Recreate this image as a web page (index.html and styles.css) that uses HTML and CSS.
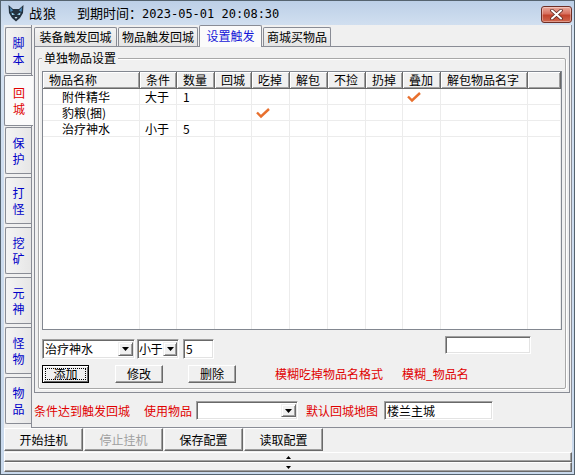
FILE: index.html
```html
<!DOCTYPE html>
<html lang="zh-CN">
<head>
<meta charset="utf-8">
<title>战狼</title>
<link rel="stylesheet" href="styles.css">
</head>
<body>
<div class="win">
  <div class="titlebar">
    <svg class="logo" width="18" height="18" viewBox="0 0 18 18">
      <path d="M1.5 1 L6 5 L12 5 L16.5 1 L16 9 L13 14 L9 17.5 L5 14 L2 9 Z" fill="#24323f"/>
      <path d="M3 3 L6 6.5 L3.5 8 Z M15 3 L12 6.5 L14.5 8 Z" fill="#4f8fc0"/>
      <path d="M4.5 8.5 L8 10.5 L5 11 Z M13.5 8.5 L10 10.5 L13 11 Z" fill="#9fe0ff"/>
      <path d="M7.5 13 L9 15 L10.5 13 Z" fill="#cfe8f5"/>
    </svg>
    <span class="app">战狼</span>
    <span class="expire">到期时间：<span class="mono">2023-05-01 20:08:30</span></span>
    <div class="close">
      <svg width="13" height="11" viewBox="0 0 13 11">
        <path d="M2 1.5 L11 9.5 M11 1.5 L2 9.5" stroke="#5a2a22" stroke-width="3.6" stroke-linecap="round"/>
        <path d="M2 1.5 L11 9.5 M11 1.5 L2 9.5" stroke="#ffffff" stroke-width="2" stroke-linecap="round"/>
      </svg>
    </div>
  </div>
  <div class="client">
    <div class="outer">
      <div class="vtabs">
        <div class="vtab">脚<br>本</div>
        <div class="vtab active">回<br>城</div>
        <div class="vtab">保<br>护</div>
        <div class="vtab">打<br>怪</div>
        <div class="vtab">挖<br>矿</div>
        <div class="vtab">元<br>神</div>
        <div class="vtab">怪<br>物</div>
        <div class="vtab">物<br>品</div>
      </div>
      <div class="opanel">
        <div class="htabs">
          <div class="htab w1">装备触发回城</div>
          <div class="htab w2">物品触发回城</div>
          <div class="htab w3 active">设置触发</div>
          <div class="htab w4">商城买物品</div>
        </div>
        <div class="ipanel">
          <div class="group">
            <div class="legend">单独物品设置</div>
            <div class="lv">
              <div class="lv-head">
                <div class="hc">物品名称</div>
                <div class="hc">条件</div>
                <div class="hc">数量</div>
                <div class="hc">回城</div>
                <div class="hc">吃掉</div>
                <div class="hc">解包</div>
                <div class="hc">不捡</div>
                <div class="hc">扔掉</div>
                <div class="hc">叠加</div>
                <div class="hc">解包物品名字</div>
                <div class="hc"></div>
              </div>
              <div class="lv-body">
                <div class="c name">附件精华</div><div class="c">大于</div><div class="c num">1</div><div class="c"></div><div class="c"></div><div class="c"></div><div class="c"></div><div class="c"></div><div class="c"><svg class="chk" width="16" height="12" viewBox="0 0 16 12"><path d="M2 5.5 L6 9.5 L14 2" fill="none" stroke="#e8702e" stroke-width="2.4"/></svg></div><div class="c"></div><div class="c"></div>
                <div class="c name">豹粮(捆)</div><div class="c"></div><div class="c"></div><div class="c"></div><div class="c"><svg class="chk" width="16" height="12" viewBox="0 0 16 12"><path d="M2 5.5 L6 9.5 L14 2" fill="none" stroke="#e8702e" stroke-width="2.4"/></svg></div><div class="c"></div><div class="c"></div><div class="c"></div><div class="c"></div><div class="c"></div><div class="c"></div>
                <div class="c name">治疗神水</div><div class="c">小于</div><div class="c num">5</div><div class="c"></div><div class="c"></div><div class="c"></div><div class="c"></div><div class="c"></div><div class="c"></div><div class="c"></div><div class="c"></div>
                <div class="f"></div><div class="f"></div><div class="f"></div><div class="f"></div><div class="f"></div><div class="f"></div><div class="f"></div><div class="f"></div><div class="f"></div><div class="f"></div><div class="f"></div>
              </div>
            </div>
            <div class="ctrls">
              <div class="combo cb-item"><span class="val">治疗神水</span><span class="drop"><svg width="7" height="4" viewBox="0 0 7 4"><path d="M0 0 H7 L3.5 4 Z" fill="#000"/></svg></span></div>
              <div class="combo cb-cond"><span class="val">小于</span><span class="drop"><svg width="7" height="4" viewBox="0 0 7 4"><path d="M0 0 H7 L3.5 4 Z" fill="#000"/></svg></span></div>
              <div class="edit ed-num">5</div>
              <div class="edit ed-right"></div>
            </div>
            <div class="btns">
              <div class="btn def"><span class="focus">添加</span></div>
              <div class="btn b-mod">修改</div>
              <div class="btn b-del">删除</div>
              <span class="red hint1">模糊吃掉物品名格式</span>
              <span class="red hint2">模糊_物品名</span>
            </div>
          </div>
        </div>
        <div class="cond">
          <span class="red">条件达到触发回城</span>
          <span class="red use">使用物品</span>
          <div class="combo cb-use"><span class="val"></span><span class="drop"><svg width="7" height="4" viewBox="0 0 7 4"><path d="M0 0 H7 L3.5 4 Z" fill="#000"/></svg></span></div>
          <span class="red map">默认回城地图</span>
          <div class="edit ed-map">楼兰主城</div>
        </div>
      </div>
    </div>
    <div class="actions">
      <div class="abtn">开始挂机</div>
      <div class="abtn disabled">停止挂机</div>
      <div class="abtn">保存配置</div>
      <div class="abtn">读取配置</div>
    </div>
    <div class="spin"><svg width="5" height="3" viewBox="0 0 5 3"><path d="M0 3 H5 L2.5 0 Z" fill="#000"/></svg></div>
    <div class="spin"><svg width="5" height="3" viewBox="0 0 5 3"><path d="M0 0 H5 L2.5 3 Z" fill="#000"/></svg></div>
  </div>
</div>
</body>
</html>
```

FILE: styles.css
```css
* { box-sizing: border-box; margin: 0; padding: 0; }

html, body {
  width: 575px;
  height: 475px;
  overflow: hidden;
  background: #c8d9ed;
}

body {
  font-family: "Noto Sans CJK SC", "Noto Sans", sans-serif;
  font-size: 12px;
  color: #000;
}

.win {
  width: 575px;
  height: 475px;
  display: flex;
  flex-direction: column;
  border: 1px solid #55636f;
  padding: 0 2px 2px 3px;
  background: linear-gradient(#bccfe7, #d6e3f2 30px, #cddcee 200px, #c9d9ec);
}

/* Title bar */
.titlebar {
  height: 24px;
  display: flex;
  align-items: center;
  flex-shrink: 0;
}

.logo { margin-left: 3px; flex-shrink: 0; }

.app {
  margin-left: 4px;
  font-size: 13px;
  line-height: 16px;
  letter-spacing: 1px;
}

.expire {
  margin-left: 20px;
  font-size: 13px;
  line-height: 16px;
}

.mono {
  font-family: "DejaVu Sans Mono", monospace;
  font-size: 12px;
}

.close {
  margin-left: auto;
  margin-top: 2px;
  width: 31px;
  height: 17px;
  border: 1px solid #6e2e25;
  border-radius: 3px;
  background: linear-gradient(#e9a99c, #d8705e 45%, #c2432c 55%, #d0684f);
  box-shadow: inset 0 0 0 1px rgba(255,255,255,0.35);
  display: flex;
  align-items: center;
  justify-content: center;
}

/* Client */
.client {
  flex: 1;
  background: #f0f0f0;
  display: flex;
  flex-direction: column;
}

.outer {
  height: 403px;
  display: flex;
  flex-shrink: 0;
}

.vtabs {
  width: 27px;
  flex-shrink: 0;
  padding-top: 2px;
  display: flex;
  flex-direction: column;
}

.vtab {
  margin-left: 1px;
  width: 26px;
  height: 47px;
  margin-bottom: 3px;
  border: 1px solid #898c95;
  border-right: none;
  border-radius: 2px 0 0 2px;
  background: linear-gradient(90deg, #f4f4f4, #e6e6e6);
  color: #0000c8;
  line-height: 16px;
  font-size: 12px;
  display: flex;
  align-items: center;
  justify-content: center;
  text-align: center;
}

.vtab.active {
  position: relative;
  z-index: 2;
  margin-left: 0;
  margin-top: -2px;
  margin-bottom: 1px;
  width: 29px;
  margin-right: -2px;
  height: 51px;
  background: #fbfbfb;
  color: #e00000;
}

.opanel {
  width: 541px;
  border-left: 1px solid #898c95;
  border-right: 1px solid #898c95;
  border-bottom: 1px solid #898c95;
  padding: 2px 0 0 2px;
  display: flex;
  flex-direction: column;
}

/* Horizontal tabs */
.htabs {
  height: 19px;
  display: flex;
  align-items: flex-end;
  flex-shrink: 0;
}

.htab {
  height: 19px;
  border: 1px solid #898c95;
  border-bottom: none;
  border-radius: 2px 2px 0 0;
  background: linear-gradient(#f4f4f4, #e4e4e4);
  line-height: 17px;
  text-align: center;
  margin-right: 1px;
}

.htab.w1 { width: 83px; }
.htab.w2 { width: 80px; }
.htab.w3 { width: 63px; }
.htab.w4 { width: 68px; }

.htab.active {
  position: relative;
  z-index: 2;
  height: 22px;
  margin-bottom: -1px;
  background: #fbfbfb;
  color: #1515d8;
  line-height: 20px;
}

.ipanel {
  width: 536px;
  height: 347px;
  flex-shrink: 0;
  border: 1px solid #898c95;
  background: #f0f0f0;
  padding: 0 3px 0 3px;
}

/* Group box */
.group {
  margin-top: 11px;
  width: 528px;
  height: 331px;
  border: 1px solid #a8a8a8;
  border-radius: 2px;
  box-shadow: 1px 1px 0 #fff, inset 1px 1px 0 #fff;
  display: flex;
  flex-direction: column;
}

.legend {
  align-self: flex-start;
  margin: -8px 0 0 3px;
  padding: 0 2px;
  background: #f0f0f0;
  line-height: 14px;
  font-size: 12px;
}

/* List view */
.lv {
  margin: 6px 0 0 3px;
  width: 520px;
  height: 259px;
  border: 1px solid #828790;
  background: #fff;
  display: flex;
  flex-direction: column;
}

.lv-head, .lv-body {
  display: grid;
  grid-template-columns: 97px 37px 38px 37px 38px 38px 38px 37px 38px 87px 1fr;
}

.lv-head { height: 17px; flex-shrink: 0; }

.hc {
  background: #f0f0f0;
  border-right: 1px solid #696969;
  border-bottom: 1px solid #696969;
  box-shadow: inset 1px 1px 0 #fff, inset -1px -1px 0 #a0a0a0;
  padding-left: 6px;
  line-height: 16px;
  white-space: nowrap;
  overflow: hidden;
}

.lv-body {
  flex: 1;
  grid-template-rows: 16px 16px 16px 1fr;
}

.c {
  border-right: 1px solid #ececec;
  border-bottom: 1px solid #ececec;
  padding-left: 5px;
  line-height: 16px;
  white-space: nowrap;
  overflow: hidden;
}

.c.name { padding-left: 19px; }
.c.num { padding-left: 6px; }

.chk { display: block; margin: 2px 0 0 -2px; }

.f { border-right: 1px solid #ececec; }

/* Inputs */
.ctrls {
  margin-top: 6px;
  height: 23px;
  display: flex;
  align-items: flex-start;
  flex-shrink: 0;
}

.combo, .edit {
  background: #fff;
  border: 1px solid;
  border-color: #a0a0a0 #fff #fff #a0a0a0;
  box-shadow: inset 1px 1px 0 #696969, inset -1px -1px 0 #e3e3e3;
  display: flex;
  align-items: center;
  line-height: 16px;
}

.combo .val {
  flex: 1;
  min-width: 0;
  padding-left: 2px;
  white-space: nowrap;
}

.drop {
  flex-shrink: 0;
  width: 15px;
  height: 14px;
  margin-right: 1px;
  background: #f0f0f0;
  border: 1px solid;
  border-color: #f0f0f0 #696969 #696969 #f0f0f0;
  box-shadow: inset 1px 1px 0 #fff, inset -1px -1px 0 #a0a0a0;
  display: flex;
  align-items: center;
  justify-content: center;
}

.cb-item { margin: 3px 0 0 3px; width: 93px; height: 20px; }
.cb-cond { margin: 3px 0 0 2px; width: 42px; height: 20px; }
.cb-cond .val { padding-left: 1px; letter-spacing: -0.5px; }
.cb-cond .drop { width: 14px; }
.ed-num { margin: 3px 0 0 4px; width: 31px; height: 20px; padding-left: 2px; }
.ed-right { margin: 0 34px 0 auto; width: 86px; height: 18px; }

.btns {
  margin-top: 6px;
  height: 18px;
  display: flex;
  align-items: center;
  flex-shrink: 0;
}

.btn {
  height: 18px;
  background: #f0f0f0;
  border: 1px solid;
  border-color: #fff #696969 #696969 #fff;
  box-shadow: inset -1px -1px 0 #a0a0a0;
  display: flex;
  align-items: center;
  justify-content: center;
  line-height: 14px;
}

.btn.def {
  margin-left: 3px;
  width: 47px;
  border-color: #000;
  box-shadow: inset 1px 1px 0 #fff, inset -1px -1px 0 #696969;
}

.focus {
  width: 41px;
  height: 12px;
  border: 1px dotted #000;
  display: flex;
  align-items: center;
  justify-content: center;
  line-height: 12px;
}

.b-mod { margin-left: 26px; width: 48px; }
.b-del { margin-left: 25px; width: 48px; }

.red { color: #e00000; line-height: 16px; white-space: nowrap; }
.hint1 { margin-left: 39px; }
.hint2 { margin-left: 19px; }

/* Condition row */
.cond {
  flex: 1;
  display: flex;
  align-items: center;
  padding-left: 0;
  padding-top: 1px;
}

.cond .use { margin-left: 14px; }
.cb-use { margin-left: 4px; width: 102px; height: 19px; }
.cb-use .drop { height: 13px; }
.cond .map { margin-left: 8px; }
.ed-map { margin-left: 6px; width: 109px; height: 19px; padding-left: 2px; }

/* Action buttons */
.actions {
  height: 23px;
  display: flex;
  gap: 1px;
  flex-shrink: 0;
}

.abtn {
  width: 79px;
  height: 23px;
  background: #f0f0f0;
  border: 1px solid;
  border-color: #fff #696969 #696969 #fff;
  box-shadow: inset -1px -1px 0 #a0a0a0;
  display: flex;
  align-items: center;
  justify-content: center;
  font-size: 12px;
  line-height: 16px;
}

.abtn.disabled { color: #a0a0a0; }

.spin {
  height: 10px;
  margin-top: 1px;
  background: #f0f0f0;
  border: 1px solid;
  border-color: #fff #696969 #696969 #fff;
  box-shadow: inset -1px -1px 0 #a0a0a0;
  display: flex;
  align-items: center;
  justify-content: center;
  flex-shrink: 0;
}

.spin + .spin { margin-top: 0; }
```
